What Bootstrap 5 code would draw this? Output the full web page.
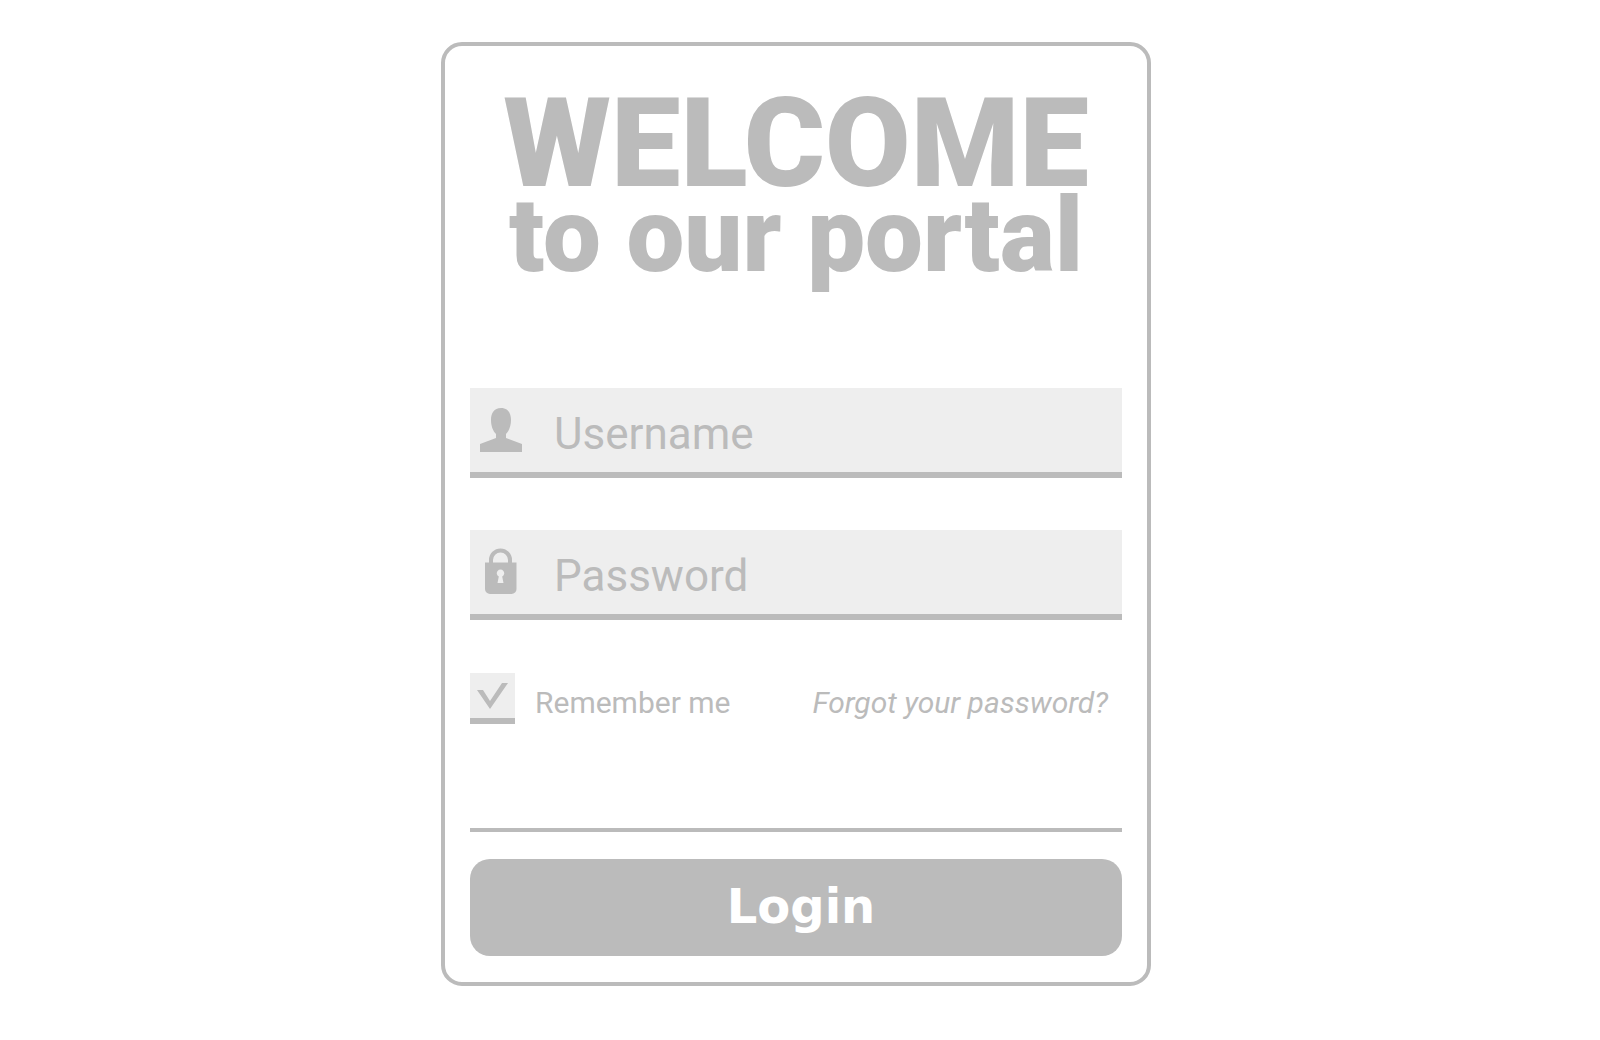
<!DOCTYPE html>
<html lang="en">
<head>
<meta charset="utf-8">
<meta name="viewport" content="width=device-width, initial-scale=1">
<title>Portal login</title>
<link href="https://cdn.jsdelivr.net/npm/bootstrap@5.3.0/dist/css/bootstrap.min.css" rel="stylesheet">
<style>
:root { --ink: #bbb; --fill: #eee; }
body { font-family: Roboto, sans-serif; color: var(--ink); background: #fff; }
.page { padding: 42px 8px 42px 0; }
.login-card { width: 100%; max-width: 710px; border: 4px solid var(--ink); border-radius: 21px; padding: 25px 25px 26px; background: #fff; color: var(--ink); }
.headline { font-weight: 900; margin: 13px 0 120px; text-align: center; white-space: nowrap; }
.headline-top { font-size: 124px; line-height: 120px; }
.headline-sub { font-size: 103px; line-height: 64px; }
.field { height: 90px; background: var(--fill); border-bottom: 6px solid var(--ink); margin-bottom: 52px; }
.field svg { width: 60px; height: 84px; flex: none; fill: var(--ink); }
.field input { border: 0; border-radius: 0; background: transparent; color: var(--ink); font-size: 44px; line-height: 60px; padding: 7px 12px 0 24px; }
.field input:focus { background: transparent; color: var(--ink); box-shadow: none; }
.field input::placeholder { color: var(--ink); opacity: 1; }
.options { font-size: 30px; line-height: 40px; margin: 53px 14px 104px 0; }
.options label, .options a { padding-top: 10px; color: var(--ink); }
.tick { appearance: none; flex: none; width: 45px; height: 51px; margin: 0 20px 0 0; background: var(--fill); border: 0; border-bottom: 6px solid var(--ink); border-radius: 0; }
.tick:checked::before { content: ""; display: block; width: 45px; height: 45px; background: var(--ink); clip-path: polygon(7px 17px, 13px 17px, 20px 28px, 32px 10px, 38px 10px, 20px 36px); }
.rule { border-top: 4px solid var(--ink); opacity: 1; margin: 0 0 27px; }
.btn-login { height: 97px; border: 0; border-radius: 20px; padding: 6px 12px 9px 22px; background: var(--ink); color: #fff; font: bold 48px/56px "DejaVu Sans", sans-serif; }
.btn-login:hover { background: #aaa; color: #fff; }
</style>
</head>
<body>
<main class="page d-flex justify-content-center">
  <form class="login-card">
    <h1 class="headline">
      <span class="headline-top d-block">WELCOME</span>
      <span class="headline-sub d-block">to our portal</span>
    </h1>
    <div class="field d-flex align-items-center">
      <svg viewBox="0 0 60 84" aria-hidden="true"><path d="M31 20c7 0 10 5 10 12 0 6-2 11-5 14v4l16 6v8H10v-8l16-6v-4c-3-3-5-8-5-14 0-7 3-12 10-12z"/></svg>
      <input class="form-control" type="text" placeholder="Username" aria-label="Username">
    </div>
    <div class="field d-flex align-items-center">
      <svg viewBox="0 0 60 84" aria-hidden="true"><path fill-rule="evenodd" d="M15 32.500h4V30a11.500 11.500 0 0 1 23 0v2.500h4.500V59a5 5 0 0 1-5 5H20a5 5 0 0 1-5-5zM23 32.500h15V30a7.500 7.500 0 0 0-15 0zM28.800 46.500l-1.300 6.500h6l-1.300-6.500a3.700 3.700 0 1 0-3.400 0z"/></svg>
      <input class="form-control" type="password" placeholder="Password" aria-label="Password">
    </div>
    <div class="options d-flex align-items-start">
      <input class="tick" type="checkbox" id="remember" checked>
      <label for="remember">Remember me</label>
      <a class="ms-auto fst-italic text-decoration-none" href="#">Forgot your password?</a>
    </div>
    <hr class="rule">
    <button class="btn btn-login w-100" type="submit">Login</button>
  </form>
</main>
<script src="https://cdn.jsdelivr.net/npm/bootstrap@5.3.0/dist/js/bootstrap.bundle.min.js"></script>
</body>
</html>
